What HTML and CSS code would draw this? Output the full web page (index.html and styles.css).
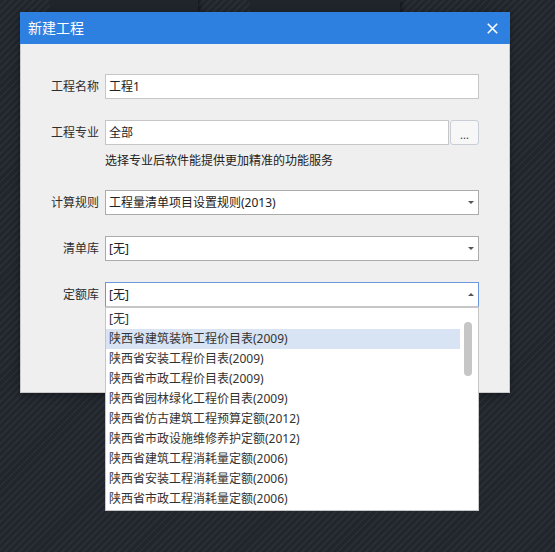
FILE: index.html
```html
<!DOCTYPE html>
<html lang="zh-CN">
<head>
<meta charset="utf-8">
<title>新建工程</title>
<link rel="stylesheet" href="styles.css">
</head>
<body>
  <div class="desk">
    <div class="desk-panel panel-a"></div>
    <div class="desk-panel panel-b"></div>
  </div>

  <div class="dialog">
    <div class="dialog-title">
      <span class="dialog-caption">新建工程</span>
      <button class="dialog-close" aria-label="关闭">
        <svg width="11" height="11" viewBox="0 0 11 11"><path d="M0.8 0.8 L10.2 10.2 M10.2 0.8 L0.8 10.2" stroke="#fff" stroke-width="1.6" fill="none"/></svg>
      </button>
    </div>

    <div class="dialog-body">
      <div class="form-row">
        <label class="form-label">工程名称</label>
        <div class="form-field">
          <div class="text-input">工程1</div>
        </div>
      </div>

      <div class="form-row">
        <label class="form-label">工程专业</label>
        <div class="form-field">
          <div class="input-group">
            <div class="text-input grow">全部</div>
            <button class="more-btn">...</button>
          </div>
          <div class="form-hint">选择专业后软件能提供更加精准的功能服务</div>
        </div>
      </div>

      <div class="form-row">
        <label class="form-label">计算规则</label>
        <div class="form-field">
          <div class="select">工程量清单项目设置规则(2013)<span class="caret down"></span></div>
        </div>
      </div>

      <div class="form-row">
        <label class="form-label">清单库</label>
        <div class="form-field">
          <div class="select">[无]<span class="caret down"></span></div>
        </div>
      </div>

      <div class="form-row">
        <label class="form-label">定额库</label>
        <div class="form-field combo">
          <div class="select open">[无]<span class="caret up"></span></div>
          <div class="dropdown">
            <ul class="dropdown-list">
              <li>[无]</li>
              <li class="hover">陕西省建筑装饰工程价目表(2009)</li>
              <li>陕西省安装工程价目表(2009)</li>
              <li>陕西省市政工程价目表(2009)</li>
              <li>陕西省园林绿化工程价目表(2009)</li>
              <li>陕西省仿古建筑工程预算定额(2012)</li>
              <li>陕西省市政设施维修养护定额(2012)</li>
              <li>陕西省建筑工程消耗量定额(2006)</li>
              <li>陕西省安装工程消耗量定额(2006)</li>
              <li>陕西省市政工程消耗量定额(2006)</li>
            </ul>
            <div class="scroll-thumb"></div>
          </div>
        </div>
      </div>
    </div>
  </div>
</body>
</html>
```

FILE: styles.css
```css
* {
  box-sizing: border-box;
}

html, body {
  margin: 0;
  height: 100%;
}

body {
  position: relative;
  overflow: hidden;
  font-family: "Noto Sans", "Noto Sans CJK SC", sans-serif;
  font-size: 12px;
  color: #333;
  background-color: #23282f;
  background-image: repeating-linear-gradient(135deg, #21262d 0 3px, #292e36 3px 5px);
}

/* desktop windows sitting behind the modal */
.desk {
  display: flex;
  padding-left: 50px;
  gap: 52px;
}

.desk-panel {
  height: 120px;
  background: #20252c;
  box-shadow: 2px 0 4px rgba(0, 0, 0, 0.45);
}

.panel-a {
  width: 148px;
}

.panel-b {
  width: 150px;
}

/* modal dialog */
.dialog {
  position: absolute;
  left: 20px;
  top: 12px;
  width: 490px;
  box-shadow: 0 2px 8px rgba(0, 0, 0, 0.35);
}

.dialog-title {
  height: 32px;
  background: #2e80e0;
  display: flex;
  align-items: center;
  justify-content: space-between;
  padding: 0 12px 0 8px;
}

.dialog-caption {
  font-size: 14px;
  color: #fff;
  line-height: 32px;
}

.dialog-close {
  border: 0;
  padding: 0;
  background: transparent;
  width: 11px;
  height: 11px;
  display: flex;
}

.dialog-body {
  height: 349px;
  background: #efefef;
  border: 1px solid #c9c9c9;
  border-top: 0;
  padding: 30px 30px 0 0;
  display: flex;
  flex-direction: column;
  gap: 21px;
}

.form-row {
  display: flex;
  align-items: flex-start;
}

.form-label {
  width: 78px;
  margin-right: 6px;
  text-align: right;
  line-height: 25px;
  color: #2e2e2e;
}

.form-field {
  width: 374px;
}

.combo {
  position: relative;
}

.text-input,
.select {
  height: 25px;
  line-height: 23px;
  padding-left: 3px;
  background: #fff;
  border: 1px solid #c6c6c6;
  color: #222;
  white-space: nowrap;
}

.input-group {
  display: flex;
}

.grow {
  flex: 1;
}

.more-btn {
  width: 29px;
  height: 25px;
  margin-left: 1px;
  padding: 0 0 4px;
  border: 1px solid #c9ced6;
  border-radius: 3px;
  background: #f7f7f7;
  font: inherit;
  font-size: 11px;
  line-height: 1;
  color: #333;
  display: flex;
  align-items: flex-end;
  justify-content: center;
}

.form-hint {
  margin-top: 7px;
  line-height: 17px;
  color: #222;
}

.select {
  position: relative;
  border-color: #ababab;
}

.select.open {
  border-color: #6b98dc;
  border-bottom-color: #c6c6c6;
}

.caret {
  position: absolute;
  right: 4px;
  top: 10px;
  width: 0;
  height: 0;
  border-left: 3px solid transparent;
  border-right: 3px solid transparent;
}

.caret.down {
  border-top: 3px solid #555;
}

.caret.up {
  border-bottom: 3px solid #555;
}

/* open combo list */
.dropdown {
  position: absolute;
  left: 0;
  right: 0;
  top: 25px;
  height: 204px;
  background: #fff;
  border: 1px solid #c6c6c6;
  padding: 1px 18px 0 0;
  z-index: 2;
}

.dropdown-list {
  list-style: none;
  margin: 0;
  padding: 0;
}

.dropdown-list li {
  height: 20px;
  line-height: 20px;
  padding-left: 3px;
  color: #333;
  white-space: nowrap;
}

.dropdown-list li.hover {
  background: #d8e3f4;
}

.scroll-thumb {
  position: absolute;
  right: 6px;
  top: 14px;
  width: 8px;
  height: 54px;
  border-radius: 4px;
  background: #c6c6c6;
}
```
